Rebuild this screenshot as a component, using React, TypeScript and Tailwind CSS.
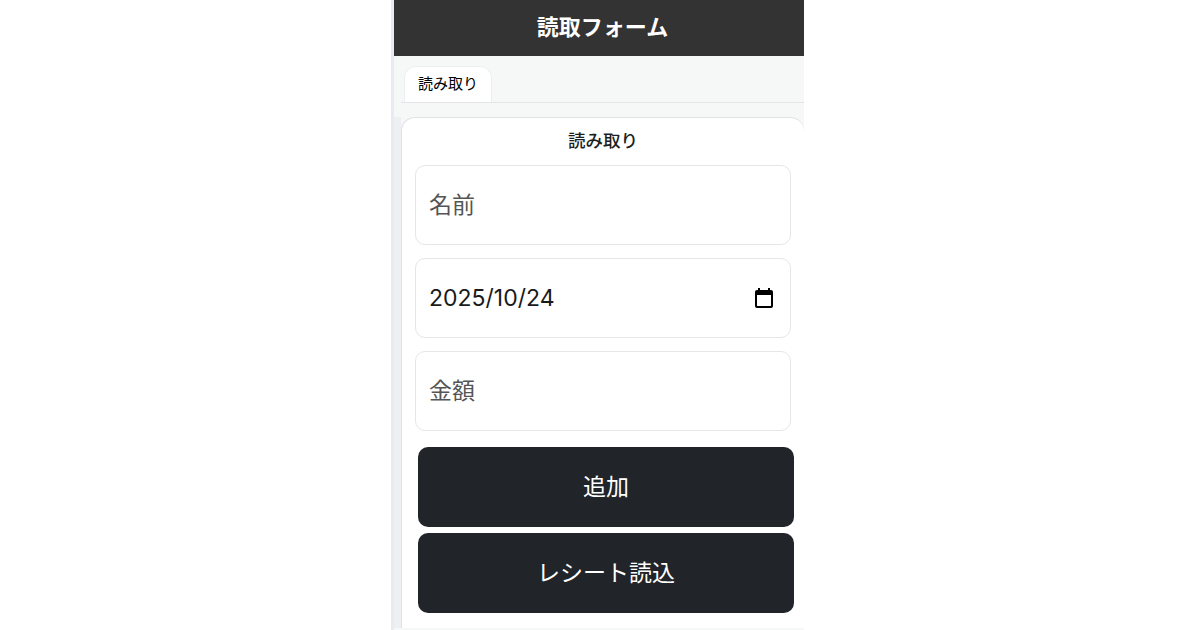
const sans = "font-['Inter','Noto_Sans_CJK_JP',sans-serif]";

function Field({ children }: { children: React.ReactNode }) {
  return (
    <div className="flex h-[80px] items-center justify-between rounded-[10px] border border-[#e5e6e9] bg-white pl-[13px] pr-[14px] text-[23px] leading-none">
      {children}
    </div>
  );
}

function Btn({ children }: { children: React.ReactNode }) {
  return (
    <div className="flex h-[80px] items-center justify-center rounded-[10px] bg-[#212529] text-[23px] text-white">
      {children}
    </div>
  );
}

export default function App() {
  return (
    <div className={`h-[630px] w-[1200px] overflow-hidden bg-white ${sans}`}>
      <div className="ml-[391px] flex h-[630px] w-[413px] flex-col border-l-[3px] border-[#e8ecf2] bg-[#f6f7f7]">
        <div className="flex h-[56px] shrink-0 items-center justify-center bg-[#333333] pl-[7px] pb-[2px] text-[22px] font-bold text-white">
          読取フォーム
        </div>
        <div className="ml-[7px] mt-[10px] flex h-[37px] shrink-0 items-end border-b border-[#e3e5e8] pl-[3px]">
          <div className="flex h-[36px] w-[88px] items-center justify-center rounded-t-[12px] border border-b-0 border-[#eceef0] bg-white text-[15px] text-black">
            読み取り
          </div>
        </div>
        <div className="mt-[14px] flex flex-1 pb-[2px]">
          <div className="w-[7px] shrink-0 bg-[#edeff3]" />
          <div className="flex flex-1 flex-col rounded-t-[14px] border-l border-t border-[#dfe1e4] bg-white">
            <div className="mt-[12px] text-center text-[17.5px] leading-[22px] font-medium text-[#1c1f22]">読み取り</div>
            <div className="mx-[13px] mt-[13px] flex flex-col gap-[13px]">
              <Field><span className="text-[#555555]">名前</span></Field>
              <Field>
                <span className="text-[#1a1a1a]">2025/10/24</span>
                <svg width="24" height="24" viewBox="0 0 24 24" fill="#000000">
                  <path d="M19 4h-1V2h-2v2H8V2H6v2H5a2 2 0 0 0-2 2v14a2 2 0 0 0 2 2h14a2 2 0 0 0 2-2V6a2 2 0 0 0-2-2zm0 16H5V9h14v11z" />
                </svg>
              </Field>
              <Field><span className="text-[#555555]">金額</span></Field>
            </div>
            <div className="ml-[16px] mr-[10px] mt-[16px] flex flex-col gap-[6px]">
              <Btn>追加</Btn>
              <Btn>レシート読込</Btn>
            </div>
          </div>
        </div>
      </div>
    </div>
  );
}
